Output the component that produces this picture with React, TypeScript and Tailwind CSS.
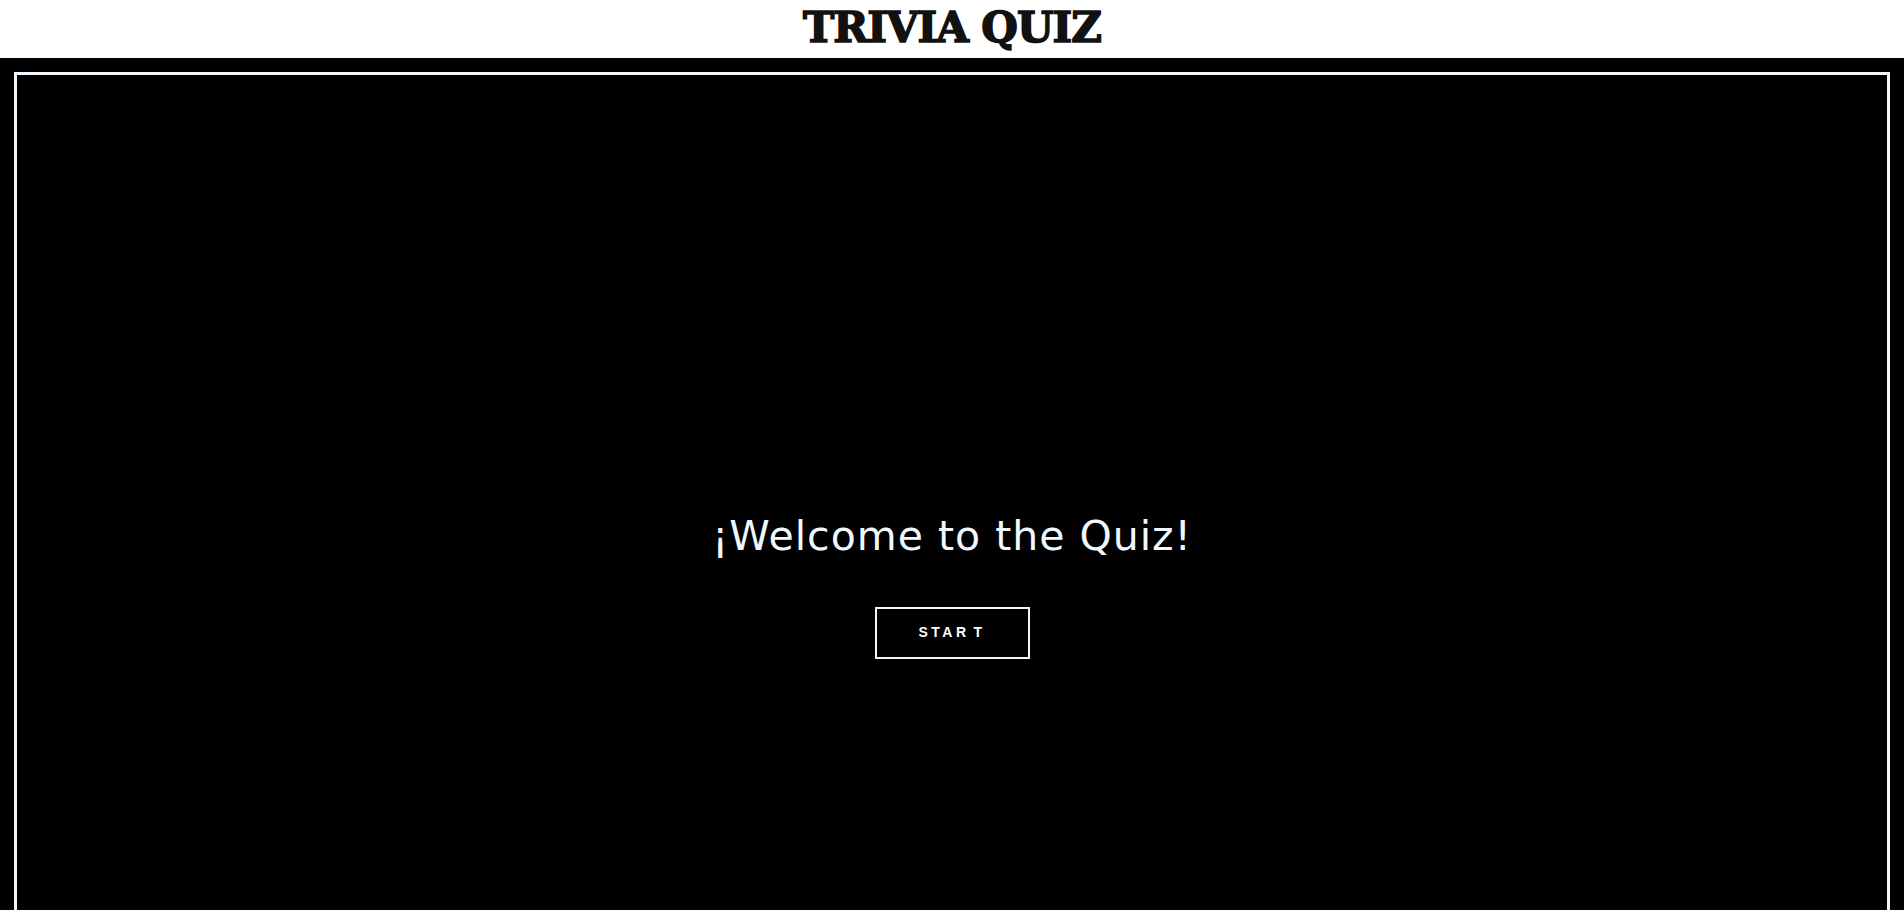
import React from 'react';

const App = () => {
  return (
    <div className="min-h-screen bg-white">
      {/* Header */}
      <header className="h-[58px] flex justify-center items-start bg-white">
        <h1
          className="mt-[7px] text-[42px] leading-none font-black text-[#111111] tracking-[-1px] [-webkit-text-stroke:1.6px_#111111]"
          style={{ fontFamily: '"DejaVu Serif", "Liberation Serif", serif' }}
        >
          TRIVIA QUIZ
        </h1>
      </header>

      {/* Quiz area */}
      <main className="bg-black p-[14px] pb-0">
        <div className="h-[1030px] border-[3px] border-[#f0f8ff] flex flex-col items-center justify-center">
          <h2
            className="text-[41px] text-[#f0f8ff] leading-none tracking-[1px]"
            style={{ fontFamily: '"DejaVu Sans", "Open Sans", sans-serif' }}
          >
            ¡Welcome to the Quiz!
          </h2>
          <button
            className="mt-[50px] w-[155px] h-[52px] border-2 border-[#f0f8ff] text-white text-[14px] font-bold tracking-[3.5px]"
            style={{ fontFamily: '"Liberation Sans", Arial, sans-serif' }}
          >
            STAR<span className="ml-[4px]">T</span>
          </button>
        </div>
      </main>
    </div>
  );
};

export default App;
